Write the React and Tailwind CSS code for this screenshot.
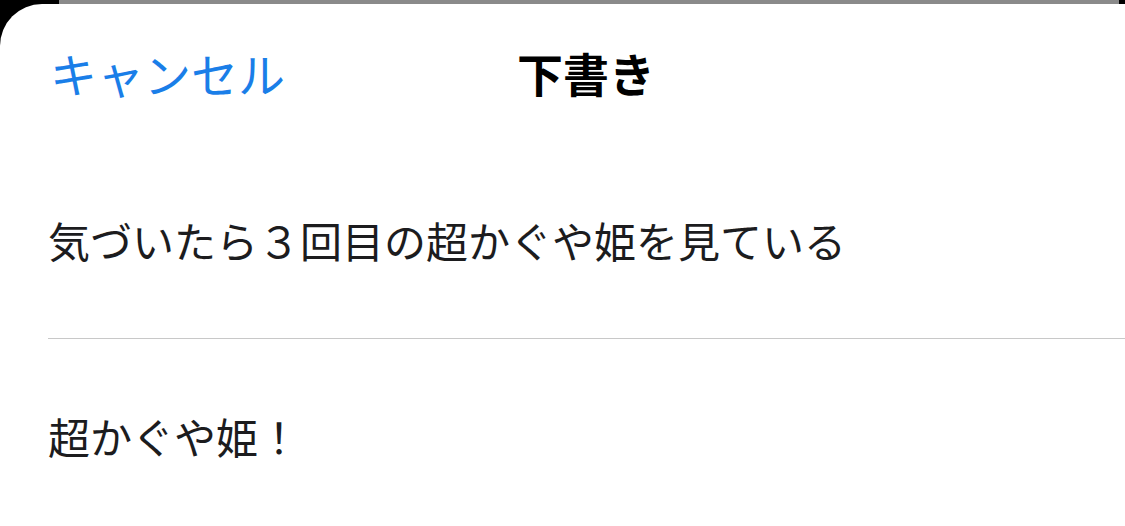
import React from 'react';

const jp = { fontFamily: '"Noto Sans CJK JP", "Noto Sans", sans-serif' };

const drafts = [
  '気づいたら３回目の超かぐや姫を見ている',
  '超かぐや姫！',
];

const App = () => {
  return (
    <div className="h-[526px] w-[1125px] bg-black overflow-hidden flex flex-col" style={jp}>
      {/* sheet stacked behind */}
      <div className="h-[4px] shrink-0 ml-[59px] mr-[6px] bg-[#8a8a8a]"></div>

      <div className="flex-1 min-h-0 bg-white rounded-tl-[42px] flex flex-col overflow-hidden">
        <div className="h-[142px] shrink-0 grid grid-cols-[1fr_auto_1fr] items-center pl-[50px] pr-[3px] pb-[6px]">
          <button className="justify-self-start text-[47px] leading-none text-[#1a7ee8]">
            キャンセル
          </button>
          <h1 className="text-[46px] leading-none font-bold text-black">下書き</h1>
          <div></div>
        </div>

        <div className="flex flex-col">
          {drafts.map((text, i) => (
            <div
              key={i}
              className={`ml-[48px] h-[193px] flex items-center shrink-0 ${
                i < drafts.length - 1 ? 'border-b border-[#c8c8c8] pb-[4px]' : ''
              }`}
            >
              <p className="text-[42px] leading-none text-[#1c1c1e] whitespace-nowrap">{text}</p>
            </div>
          ))}
        </div>
      </div>
    </div>
  );
};

export default App;
